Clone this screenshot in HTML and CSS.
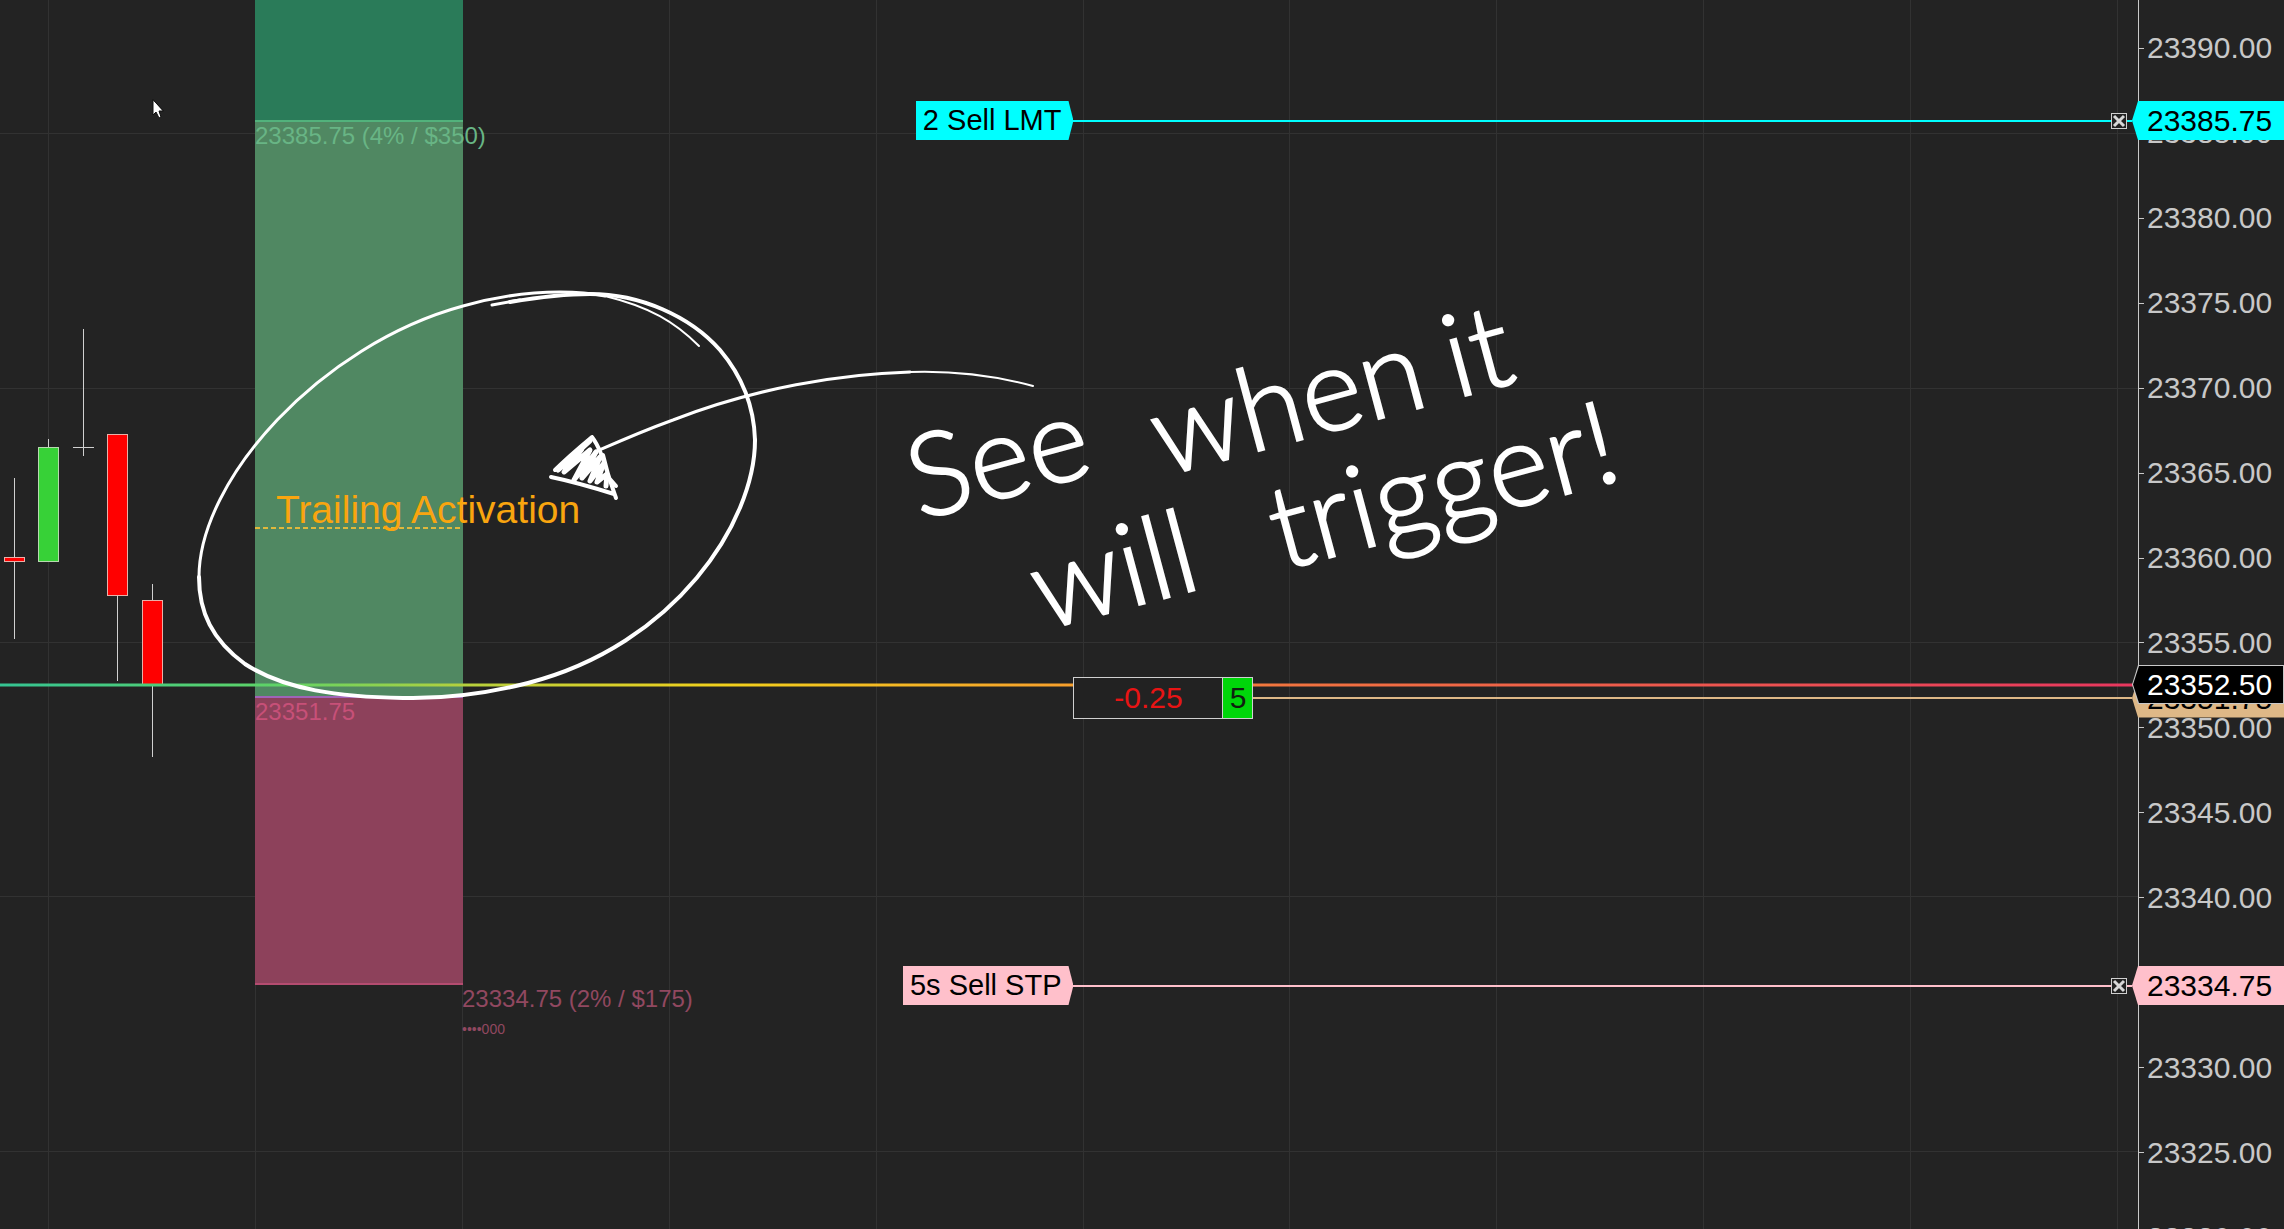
FILE: index.html
```html
<!DOCTYPE html>
<html lang="en">

<head>
  <meta charset="UTF-8">
  <meta name="viewport" content="width=device-width, initial-scale=1.0">
  <title>Chart</title>
  <link rel="stylesheet" href="styles.css">
</head>

<body>

  <div class="chart">
    <svg class="plot" aria-hidden="true">
      <defs>
        <linearGradient id="priceGradient">
          <stop offset="0" stop-color="#35c493" />
          <stop offset="0.13" stop-color="#5fd466" />
          <stop offset="0.22" stop-color="#b8d03c" />
          <stop offset="0.34" stop-color="#f2d01c" />
          <stop offset="0.5" stop-color="#f7a02c" />
          <stop offset="0.6" stop-color="#f2743f" />
          <stop offset="1" stop-color="#e8375f" />
        </linearGradient>
      </defs>

      <!-- grid -->
      <g class="grid">
        <rect x="48" y="0" width="1" height="100%" />
        <rect x="255" y="0" width="1" height="100%" />
        <rect x="462" y="0" width="1" height="100%" />
        <rect x="669" y="0" width="1" height="100%" />
        <rect x="876" y="0" width="1" height="100%" />
        <rect x="1083" y="0" width="1" height="100%" />
        <rect x="1289" y="0" width="1" height="100%" />
        <rect x="1496" y="0" width="1" height="100%" />
        <rect x="1703" y="0" width="1" height="100%" />
        <rect x="1910" y="0" width="1" height="100%" />
        <rect x="2117" y="0" width="1" height="100%" />
        <rect x="0" y="133" width="100%" height="1" />
        <rect x="0" y="388" width="100%" height="1" />
        <rect x="0" y="642" width="100%" height="1" />
        <rect x="0" y="896" width="100%" height="1" />
        <rect x="0" y="1151" width="100%" height="1" />
      </g>

      <!-- candles -->
      <g class="wick">
        <path d="M14.5 478V639M48.5 439V447M83.5 329V456M73 447.5H94M117.5 596V681M152.5 584V757" />
      </g>
      <g class="down">
        <rect x="4.5" y="557.5" width="20" height="4" />
        <rect x="107.5" y="434.5" width="20" height="161" />
        <rect x="142.5" y="600.5" width="20" height="84" />
      </g>
      <rect class="up" x="38.5" y="447.5" width="20" height="114" />

      <!-- risk / reward zones -->
      <rect class="zone-over" x="255" y="0" width="208" height="120" />
      <rect class="zone-profit" x="255" y="120" width="208" height="577" />
      <rect class="zone-loss" x="255" y="697" width="208" height="288" />
      <rect class="line-target" x="255" y="120" width="208" height="2" />
      <rect class="line-entry" x="255" y="696" width="208" height="2" />
      <rect class="line-stop" x="255" y="983" width="208" height="2" />
      <path class="line-trail" d="M255 528H462" />

      <!-- last price -->
      <rect class="price-edge" x="0" y="683" width="100%" height="4" fill="url(#priceGradient)" />
      <rect x="0" y="684" width="100%" height="2" fill="url(#priceGradient)" />
    </svg>

    <div class="axis">
      <ul class="ticks">
        <li>23390.00</li>
        <li>23385.00</li>
        <li>23380.00</li>
        <li>23375.00</li>
        <li>23370.00</li>
        <li>23365.00</li>
        <li>23360.00</li>
        <li>23355.00</li>
        <li>23350.00</li>
        <li>23345.00</li>
        <li>23340.00</li>
        <li>23335.00</li>
        <li>23330.00</li>
        <li>23325.00</li>
        <li>23320.00</li>
      </ul>
    </div>

    <div class="zone-label target-label">23385.75 (4% / $350)</div>
    <div class="zone-label entry-label">23351.75</div>
    <div class="zone-label stop-label">
      <p>23334.75 (2% / $175)</p>
      <p class="account">••••000</p>
    </div>
    <div class="trail-label">Trailing Activation</div>

    <div class="order limit">
      <div class="order-name"><span>2 Sell LMT</span></div>
      <div class="line"></div>
      <button class="cancel" aria-label="Cancel limit order">
        <svg viewBox="0 0 14 14"><path d="M2 2L12 12M12 2L2 12" /></svg>
      </button>
      <div class="line"></div>
      <div class="price-tag"><span>23385.75</span></div>
    </div>

    <div class="order position">
      <div class="pnl"><span class="value">-0.25</span><span class="qty">5</span></div>
      <div class="line"></div>
      <div class="price-tag"><span>23351.75</span></div>
    </div>

    <div class="order stop">
      <div class="order-name"><span>5s Sell STP</span></div>
      <div class="line"></div>
      <button class="cancel" aria-label="Cancel stop order">
        <svg viewBox="0 0 14 14"><path d="M2 2L12 12M12 2L2 12" /></svg>
      </button>
      <div class="line"></div>
      <div class="price-tag"><span>23334.75</span></div>
    </div>

    <div class="price-tag last"><span>23352.50</span></div>

    <!-- pen marks -->
    <svg class="ink" aria-hidden="true">
      <path class="w4" d="M510 302C540 297 565 294 590 294C640 294 690 316 720 350C742 376 754 405 755 440" />
      <path class="w3" d="M492 305L520 300" />
      <path class="w4" d="M755 440C755 522 675 645 528 683C485 694 445 699 403 698C340 697 285 690 245 664C212 640 199 612 199 577" />
      <path class="w3" d="M199 577C199 480 320 345 463 306C495 297 530 292 560 292C580 292 595 294 605 296" />
      <path class="w2" d="M605 296C650 307 675 322 699 346" />
      <path class="w3" d="M910 372C840 374 755 388 673 420C640 432 620 441 595 452" />
      <path class="w2" d="M1033 386C985 373 940 371 910 372" />
      <path class="w4" d="M592 437C580 447 568 457 555 470M551 477C575 482 598 489 614 494M592 437C602 450 606 470 616 498M603 455L609 478L616 486" />
      <path class="w5" d="M590 441L558 470L582 449L564 472L590 450L574 480L596 452L582 478L600 457L590 481L604 463L597 482L607 474L606 486" />
      <path class="pointer" d="M153 100V115L156 112L159 118L161 117L159 111H163Z" />
    </svg>

    <div class="note">
      <span class="see">See</span>
      <span class="when">when</span>
      <span class="it">it</span>
      <span class="will">will</span>
      <span class="trigger">trigger!</span>
    </div>
  </div>

</body>

</html>
```
FILE: styles.css
```css
* {
  box-sizing: border-box;
}

body {
  margin: 0;
  background-color: #232323;
  font-family: "Liberation Sans", Arial, sans-serif;
  font-size: 30px;
}

p,
ul {
  margin: 0;
  padding: 0;
}

.chart {
  position: relative;
  display: flex;
  height: 100vh;
  overflow: hidden;
}

.plot {
  flex: 1;
  min-width: 0;
  height: 100%;
}

.grid {
  fill: #323232;
}

.wick {
  stroke: #d0d0d0;
  fill: none;
}

.down {
  fill: #ff0000;
  stroke: #e8b0a8;
}

.up {
  fill: #37d137;
  stroke: #b8d8b0;
}

.zone-over {
  fill: #2a7b59;
}

.zone-profit {
  fill: #508862;
}

.zone-loss {
  fill: #8d415b;
}

.line-target {
  fill: #52b27c;
}

.line-entry {
  fill: #a064b8;
}

.line-stop {
  fill: #b44c70;
}

.line-trail {
  stroke: #e0b83c;
  stroke-width: 2;
  stroke-dasharray: 5 3;
}

.price-edge {
  opacity: 0.5;
}

/* price scale */
.axis {
  width: 146px;
  border-left: 1px solid #c8c8c8;
  overflow: hidden;
}

.ticks {
  display: grid;
  grid-auto-rows: 1fr;
  height: 1280px;
  padding-top: 6px;
  list-style: none;
  color: #c8c8c8;
}

.ticks li {
  display: flex;
  align-items: center;
  gap: 3px;
}

.ticks li::before {
  content: '';
  width: 5px;
  height: 1px;
  background-color: #c8c8c8;
}

/* zone texts */
.zone-label {
  position: absolute;
  font-size: 24px;
  line-height: 28px;
}

.target-label {
  top: 122px;
  left: 255px;
  color: #68b585;
}

.entry-label {
  top: 698px;
  left: 255px;
  color: #c75078;
}

.stop-label {
  top: 985px;
  left: 462px;
  color: #914860;
}

.account {
  font-size: 14px;
  line-height: 32px;
}

.trail-label {
  position: absolute;
  top: 488px;
  left: 276px;
  color: #f9a50f;
  font-size: 39px;
  line-height: 44px;
}

/* orders */
.order {
  position: absolute;
  left: 0;
  right: 0;
  display: grid;
  grid-template-columns: 47% 1fr 16px 5px 152px;
  align-items: center;
}

.limit {
  top: 101px;
  color: #00ffff;
}

.stop {
  top: 966px;
  color: #ffc0cb;
}

.position {
  top: 677px;
  grid-template-columns: 180px 1fr 152px;
  padding-left: 47%;
  color: #deb887;
}

.line {
  height: 2px;
  background-color: currentColor;
}

.order-name {
  justify-self: end;
  height: 39px;
  padding: 0 12px 0 7px;
  background-color: currentColor;
  clip-path: polygon(0 0, calc(100% - 5px) 0, 100% 50%, calc(100% - 5px) 100%, 0 100%);
  font-size: 29px;
  line-height: 39px;
  white-space: nowrap;
}

.order-name span,
.price-tag span {
  color: #000000;
}

.price-tag {
  width: 152px;
  height: 39px;
  padding-left: 15px;
  background-color: currentColor;
  clip-path: polygon(6px 0, 100% 0, 100% 100%, 6px 100%, 0 50%);
  line-height: 39px;
}

.last {
  position: absolute;
  top: 665px;
  right: 0;
  background-color: #c8c8c8;
}

.last::before {
  content: '';
  position: absolute;
  inset: 1px;
  background-color: #000000;
  clip-path: polygon(6px 0, 100% 0, 100% 100%, 6px 100%, 0 50%);
}

.last span {
  position: relative;
  color: #ffffff;
}

.cancel {
  width: 16px;
  height: 16px;
  padding: 0;
  border: 1px solid #d0d0d0;
  background-color: #222222;
}

.cancel svg {
  display: block;
  width: 14px;
  height: 14px;
  fill: none;
  stroke: #d8d8d8;
  stroke-width: 3;
}

.pnl {
  display: flex;
  height: 42px;
  border: 1px solid #d0d0d0;
  background-color: #222222;
  line-height: 40px;
  text-align: center;
}

.value {
  flex: 1;
  color: #e81414;
}

.qty {
  width: 30px;
  border-left: 1px solid #d0d0d0;
  background-color: #00d60a;
  color: #102010;
}

/* pen */
.ink {
  position: absolute;
  top: 0;
  left: 0;
  width: 100%;
  height: 100%;
  fill: none;
  stroke: #ffffff;
  stroke-linecap: round;
  stroke-linejoin: round;
  pointer-events: none;
}

.w2 {
  stroke-width: 2;
}

.w3 {
  stroke-width: 3;
}

.w4 {
  stroke-width: 4;
}

.w5 {
  stroke-width: 5;
}

.pointer {
  fill: #ffffff;
  stroke: #111111;
}

.note span {
  position: absolute;
  color: #ffffff;
  font-family: Lato, sans-serif;
  font-size: 116px;
  font-weight: 300;
  line-height: 120px;
  -webkit-text-stroke: 2px #ffffff;
  transform: rotate(-15deg);
  transform-origin: left bottom;
}

.note .see {
  top: 416px;
  left: 924px;
}

.note .when {
  top: 372px;
  left: 1168px;
}

.note .it {
  top: 294px;
  left: 1460px;
}

.note .will {
  top: 526px;
  left: 1048px;
}

.note .trigger {
  top: 466px;
  left: 1286px;
}
```
